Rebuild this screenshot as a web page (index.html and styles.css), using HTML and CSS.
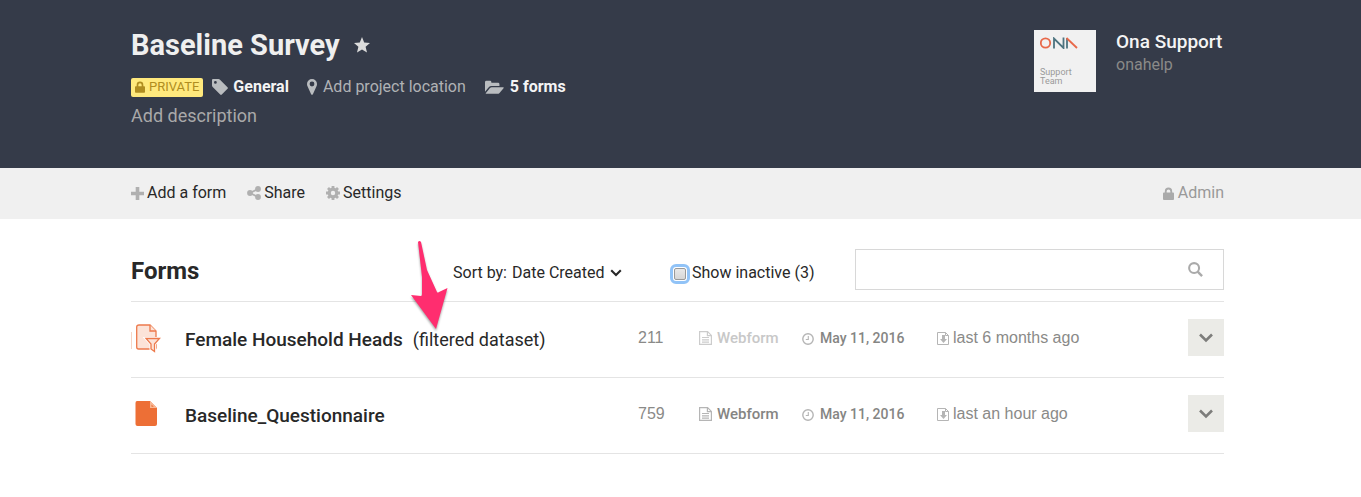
FILE: index.html
```html
<!DOCTYPE html>
<html lang="en">
<head>
<meta charset="utf-8">
<title>Baseline Survey</title>
<link rel="stylesheet" href="styles.css">
</head>
<body>
<svg class="sprite" aria-hidden="true">
  <symbol id="lock" viewBox="0 0 12 14"><path d="M1 6h1V4.500a4 4 0 0 1 8 0V6h1a1 1 0 0 1 1 1v6a1 1 0 0 1-1 1H1a1 1 0 0 1-1-1V7a1 1 0 0 1 1-1zm3 0h4V4.500a2 2 0 0 0-4 0z"/></symbol>
  <symbol id="doc" viewBox="0 0 13 14"><path fill="none" stroke="currentColor" stroke-width="1.200" d="M.6.6h8l3.800 3.800v9H.6zM8.400.6v4h4M3 6.500h7M3 8.800h7M3 11.100h7"/></symbol>
  <symbol id="clock" viewBox="0 0 12 12"><circle cx="6" cy="6" r="5.200" fill="none" stroke="currentColor" stroke-width="1.400"/><path fill="none" stroke="currentColor" stroke-width="1.100" d="M6.300 3v3.500H3.800"/></symbol>
  <symbol id="inbox" viewBox="0 0 12 13"><path fill="none" stroke="currentColor" stroke-width="1" d="M.5.5h8l3 3v9H.5zM8.500.5v3h3"/><path d="M5 3h3v4h2l-3.500 4L3 7h2z"/></symbol>
  <symbol id="chevron" viewBox="0 0 14 10"><path fill="none" stroke="currentColor" stroke-width="2.600" d="M1 1.500l6 6 6-6"/></symbol>
</svg>
<header class="masthead">
  <div class="project">
    <h1 class="title">Baseline Survey
      <svg class="star" viewBox="0 0 16 16" aria-hidden="true"><path d="M8 0l2.200 5.400 5.800.5-4.400 3.800L13 15.500 8 12.400l-5 3.100 1.400-5.800L0 5.900l5.800-.5z"/></svg>
    </h1>
    <div class="meta">
      <span class="badge"><svg class="badge-icon" aria-hidden="true"><use href="#lock"/></svg>PRIVATE</span>
      <span class="tag"><svg class="tag-icon" viewBox="0 0 16 16" aria-hidden="true"><path fill-rule="evenodd" d="M1 0h5.500q.8 0 1.500.700l7.500 7.500q.8.800 0 1.600l-5.700 5.700q-.8.800-1.600 0L.7 8Q0 7.300 0 6.500V1q0-1 1-1zm2.400 2a1.400 1.400 0 1 0 0 2.800 1.400 1.400 0 0 0 0-2.800z"/></svg>General</span>
      <a class="location" href="#"><svg class="pin-icon" viewBox="0 0 10 16" aria-hidden="true"><path fill-rule="evenodd" d="M5 0a5 5 0 0 1 5 5q0 1.200-.5 2.200L6 15q-1 1.700-2 0L.5 7.200Q0 6.200 0 5a5 5 0 0 1 5-5zm0 2.600a2.400 2.400 0 1 0 0 4.800 2.400 2.400 0 0 0 0-4.800z"/></svg>Add project location</a>
      <span class="count"><svg class="folder-icon" viewBox="0 0 20 15" aria-hidden="true"><path d="M0 12V2Q0 .500 1.500.500h3.800q1.400 0 1.400 1.500v.600h7q1.500 0 1.500 1.500V6H7Q5 6 3.700 7.500zM7.200 7.200H19q1.200 0 .5 1l-4.200 5q-.8 1-2.300 1H1.500q-1.200 0-.5-1l4-5q.9-1 2.200-1z"/></svg>5 forms</span>
    </div>
    <a class="describe" href="#">Add description</a>
  </div>
  <div class="account">
    <div class="avatar">
      <svg class="ona" viewBox="0 0 38 12" role="img" aria-label="Ona"><g fill="none" stroke-width="1.800"><circle cx="5.500" cy="6" r="4.700" stroke="#e8694a"/><path stroke="#4d7480" d="M14 11.500V1.500L23.500 11V.500M27 11.500V1"/><path stroke="#e8694a" d="M26.500 1l10.500 10"/></g></svg>
      <span class="avatar-text">Support<br>Team</span>
    </div>
    <div class="identity">
      <div class="name">Ona Support</div>
      <div class="handle">onahelp</div>
    </div>
  </div>
</header>
<nav class="toolbar">
  <a class="action" href="#"><svg class="tool-icon" viewBox="0 0 13 13" aria-hidden="true"><path d="M4.700 0h3.600v4.700H13v3.600H8.300V13H4.700V8.300H0V4.700h4.700z"/></svg>Add a form</a>
  <a class="action" href="#"><svg class="tool-icon share" viewBox="0 0 14 14" aria-hidden="true"><circle cx="3" cy="7" r="2.900"/><circle cx="11" cy="3" r="2.900"/><circle cx="11" cy="11" r="2.900"/><path fill="none" stroke="currentColor" stroke-width="1.800" d="M11 3L3 7l8 4"/></svg>Share</a>
  <a class="action" href="#"><svg class="tool-icon gear" viewBox="0 0 14 14" aria-hidden="true"><circle cx="7" cy="7" r="3.800" fill="none" stroke="currentColor" stroke-width="3.200"/><path stroke="currentColor" stroke-width="2.800" d="M7 0v2.500M7 11.500V14M0 7h2.500M11.500 7H14M2 2l1.800 1.800M10.200 10.200L12 12M12 2l-1.800 1.800M2 12l1.800-1.800"/></svg>Settings</a>
  <a class="action admin" href="#"><svg class="lock-icon" aria-hidden="true"><use href="#lock"/></svg>Admin</a>
</nav>
<main class="content">
  <div class="filters">
    <h2 class="heading">Forms</h2>
    <div class="sort">
      <label for="sort">Sort by:</label>
      <select id="sort" class="sort-select"><option>Date Created</option></select>
      <svg class="sort-icon" aria-hidden="true"><use href="#chevron"/></svg>
    </div>
    <label class="inactive"><input class="check" type="checkbox">Show inactive (3)</label>
    <div class="search">
      <input class="search-input" type="search" aria-label="Search forms">
      <svg class="search-icon" viewBox="0 0 16 16" aria-hidden="true"><circle cx="6.500" cy="6.500" r="5.300" fill="none" stroke="currentColor" stroke-width="2.200"/><path stroke="currentColor" stroke-width="2.600" d="M10.300 10.300l4.700 4.700"/></svg>
    </div>
  </div>
  <table class="forms" aria-label="Forms">
    <colgroup><col class="c-icon"><col><col class="c-count"><col class="c-type"><col class="c-date"><col class="c-last"><col class="c-menu"></colgroup>
    <tr>
      <td><svg class="file filtered" viewBox="0 0 30 30" aria-hidden="true"><path stroke="#f6d5c5" d="M.5 9v17"/><path fill="#fce3d8" stroke="#ed7a4c" stroke-width="1.300" d="M8 2h11l6 6v17q0 1-1 1H7.500Q5.700 26 5.700 24V4Q5.700 2 8 2z"/><path fill="#fce3d8" stroke="#ed7a4c" stroke-width="1.300" d="M19 2v6h6"/><path fill="#fff" stroke="#fff" stroke-width="3" d="M15 15.500h13.500l-5 5.500v7.500L20 26v-5z"/><path fill="#fce3d8" stroke="#ed7a4c" stroke-width="1.300" d="M15 15.500h13.500l-5 5.500v7.500L20 26v-5z"/></svg></td>
      <td class="form-name"><a class="form-link" href="#">Female Household Heads</a><span class="note">(filtered dataset)<svg class="pointer" viewBox="0 0 42 94" aria-hidden="true"><path d="M10 3q1.500-2 3 0l6 28 10 22q.5 1 2 0l8.500-4L28 90 3 56l10 1q1 0 1-2V38z"/></svg></span></td>
      <td class="number">211</td>
      <td class="strong faded"><svg class="doc-icon" aria-hidden="true"><use href="#doc"/></svg>Webform</td>
      <td class="strong date"><svg class="clock-icon" aria-hidden="true"><use href="#clock"/></svg>May 11, 2016</td>
      <td class="last"><svg class="inbox-icon" aria-hidden="true"><use href="#inbox"/></svg>last 6 months ago</td>
      <td><button class="menu" aria-label="Form options"><svg class="menu-icon" aria-hidden="true"><use href="#chevron"/></svg></button></td>
    </tr>
    <tr>
      <td><svg class="file" viewBox="0 0 30 30" aria-hidden="true"><path fill="#ed6f36" d="M6 2h13l7 7v16q0 2-2 2H6.500q-2 0-2-2V4q0-2 1.500-2z"/><path fill="#f8b895" d="M19 2l7 7h-7z"/><path fill="#ed6f36" d="M20.500 5.500l2.300 2.300h-2.300z"/></svg></td>
      <td class="form-name"><a class="form-link" href="#">Baseline_Questionnaire</a></td>
      <td class="number">759</td>
      <td class="strong"><svg class="doc-icon" aria-hidden="true"><use href="#doc"/></svg>Webform</td>
      <td class="strong date"><svg class="clock-icon" aria-hidden="true"><use href="#clock"/></svg>May 11, 2016</td>
      <td class="last"><svg class="inbox-icon" aria-hidden="true"><use href="#inbox"/></svg>last an hour ago</td>
      <td><button class="menu" aria-label="Form options"><svg class="menu-icon" aria-hidden="true"><use href="#chevron"/></svg></button></td>
    </tr>
  </table>
</main>
</body>
</html>
```
FILE: styles.css
```css
* { box-sizing: border-box; }
body {
  margin: 0;
  background: #fff;
  color: #282828;
  font: 16px/20px Roboto, "Liberation Sans", sans-serif;
}
a { color: inherit; text-decoration: none; }
svg { fill: currentColor; flex: none; }
.sprite { position: absolute; width: 0; height: 0; }

.masthead, .toolbar, .content { padding: 0 137px 0 131px; }
.masthead {
  display: flex;
  justify-content: space-between;
  background: #353b49;
  min-height: 168px;
  padding-top: 28px;
}
.title {
  display: flex;
  align-items: center;
  gap: 14px;
  margin: 0;
  color: #efefef;
  font-size: 29px;
  line-height: 34px;
  font-weight: 700;
}
.star { width: 16px; height: 16px; color: #dcdcdc; }
.meta {
  display: flex;
  align-items: center;
  margin-top: 15px;
  color: #b0b2b5;
}
.meta > * { display: flex; align-items: center; }
.badge {
  gap: 4px;
  height: 19px;
  padding: 0 4px;
  border-radius: 2px;
  background: #ffe97d;
  color: #b08d20;
  font-size: 13px;
}
.badge-icon { width: 10px; height: 12px; }
.tag { gap: 5px; margin-left: 9px; }
.tag-icon { width: 16px; height: 16px; color: #b9bcbf; }
.tag, .count { font-weight: 700; }
.tag, .count, .name { color: #f4f4f4; }
.location { gap: 6px; margin-left: 18px; }
.pin-icon { width: 10px; height: 16px; color: #b9bcbf; }
.count { gap: 6px; margin-left: 19px; }
.folder-icon { width: 19px; height: 15px; color: #b9bcbf; }
.describe { display: inline-block; margin-top: 9px; color: #a9a9a9; font-size: 18px; }

.account { display: flex; gap: 20px; margin-top: 2px; }
.avatar {
  display: flex;
  flex-direction: column;
  justify-content: space-between;
  width: 62px;
  height: 62px;
  padding: 7px 6px 6px;
  background: #f1f1f1;
}
.ona { width: 38px; height: 12px; }
.avatar-text { color: #9a9a9a; font-size: 9px; line-height: 9px; }
.identity { min-width: 108px; }
.name { font-size: 19px; line-height: 24px; font-weight: 500; }
.handle { color: #8a8a88; line-height: 22px; }

.toolbar {
  display: flex;
  align-items: center;
  gap: 21px;
  min-height: 51px;
  padding-bottom: 1px;
  background: #f0f0f0;
}
.action { display: flex; align-items: center; gap: 3px; }
.tool-icon { width: 13px; height: 13px; color: #b0b0b0; }
.share, .gear { width: 14px; height: 14px; }
.lock-icon { width: 11px; height: 13px; color: #aaa; }
.admin { gap: 4px; margin-left: auto; color: #999; }

.filters {
  display: grid;
  grid-template-columns: 322fr 218fr 184fr 369fr;
  align-items: center;
  height: 82px;
  padding-top: 19px;
}
.heading { margin: 0; padding-top: 3px; font-size: 24px; line-height: 28px; font-weight: 700; }
.sort { display: flex; align-items: center; gap: 5px; padding-top: 6px; white-space: nowrap; }
.sort-select {
  appearance: none;
  padding: 0;
  border: 0;
  background: none;
  color: inherit;
  font: inherit;
}
.sort-icon { width: 12px; height: 8px; }
.inactive { display: flex; align-items: center; gap: 6px; padding-top: 6px; white-space: nowrap; }
.check {
  appearance: none;
  width: 12px;
  height: 12px;
  margin: 2px 0 0 3px;
  border: 1px solid #999;
  border-radius: 2px;
  background: linear-gradient(#e8e8e8, #d6d6d6);
  outline: 3px solid #91c3f7;
  outline-offset: 1px;
}
.search {
  display: flex;
  align-items: center;
  height: 41px;
  padding-right: 20px;
  border: 1px solid #d8d8d8;
}
.search-input { flex: 1; min-width: 0; height: 39px; padding: 0 12px; border: 0; outline: 0; background: none; font: inherit; }
.search-icon { width: 15px; height: 15px; color: #aaa; }

.forms {
  width: 100%;
  table-layout: fixed;
  border-collapse: collapse;
}
.c-icon { width: 54px; }
.c-count { width: 61px; }
.c-type { width: 103px; }
.c-date { width: 135px; }
.c-last { width: 251px; }
.c-menu { width: 36px; }
.forms td {
  height: 76px;
  padding: 0 0 4px;
  border: solid #e4e4e4;
  border-width: 1px 0;
  white-space: nowrap;
}
.file { display: block; width: 30px; height: 30px; }
.forms .form-name { padding-bottom: 0; font-size: 18px; }
.form-link { font-size: 19px; font-weight: 500; }
.note { position: relative; margin-left: 10px; }
.pointer {
  position: absolute;
  left: -5px;
  bottom: 17px;
  width: 42px;
  height: 94px;
  color: #ff2d6f;
  filter: drop-shadow(0 2px 1px rgba(0, 0, 0, .35));
}
.number, .last { color: #8a8a88; font-family: "Liberation Sans", sans-serif; }
.strong { color: #858583; font-size: 15px; font-weight: 500; }
.date { font-size: 14px; }
.faded { color: #c8c8c8; }
.doc-icon, .clock-icon, .inbox-icon { vertical-align: -2px; color: #b5b5b5; }
.faded .doc-icon { color: #ccc; }
.doc-icon { width: 13px; height: 14px; margin-right: 5px; }
.clock-icon { width: 12px; height: 12px; margin-right: 6px; }
.inbox-icon { width: 12px; height: 13px; margin-right: 4px; }
.menu {
  display: flex;
  align-items: center;
  justify-content: center;
  width: 36px;
  height: 37px;
  padding: 0;
  border: 0;
  background: #ebebe7;
  color: #7d7d7b;
}
.menu-icon { width: 14px; height: 10px; }
```
